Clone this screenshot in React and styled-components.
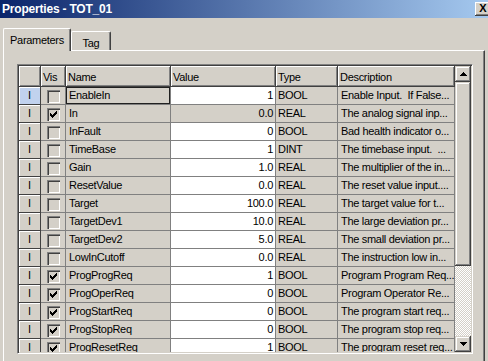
import React from 'react';
import styled, { createGlobalStyle } from 'styled-components';

const Global = createGlobalStyle`
  html, body { margin: 0; padding: 0; overflow: hidden; background: #d4d0c8; }
  body { font-family: "Liberation Sans", Arial, sans-serif; }
`;

const COLS = '22px 25px 105px 105px 62px 117px';

const rows = [
  { name: 'EnableIn', value: '1', type: 'BOOL', desc: 'Enable Input.  If False...', vis: false, edit: true, sel: true },
  { name: 'In', value: '0.0', type: 'REAL', desc: 'The analog signal inp...', vis: true, edit: false },
  { name: 'InFault', value: '0', type: 'BOOL', desc: 'Bad health indicator o...', vis: false, edit: true },
  { name: 'TimeBase', value: '1', type: 'DINT', desc: 'The timebase input.  ...', vis: false, edit: true },
  { name: 'Gain', value: '1.0', type: 'REAL', desc: 'The multiplier of the in...', vis: false, edit: true },
  { name: 'ResetValue', value: '0.0', type: 'REAL', desc: 'The reset value input....', vis: false, edit: true },
  { name: 'Target', value: '100.0', type: 'REAL', desc: 'The target value for t...', vis: false, edit: true },
  { name: 'TargetDev1', value: '10.0', type: 'REAL', desc: 'The large deviation pr...', vis: false, edit: true },
  { name: 'TargetDev2', value: '5.0', type: 'REAL', desc: 'The small deviation pr...', vis: false, edit: true },
  { name: 'LowInCutoff', value: '0.0', type: 'REAL', desc: 'The instruction low in...', vis: false, edit: true },
  { name: 'ProgProgReq', value: '1', type: 'BOOL', desc: 'Program Program Req...', vis: true, edit: true },
  { name: 'ProgOperReq', value: '0', type: 'BOOL', desc: 'Program Operator Re...', vis: true, edit: true },
  { name: 'ProgStartReq', value: '0', type: 'BOOL', desc: 'The program start req...', vis: true, edit: true },
  { name: 'ProgStopReq', value: '0', type: 'BOOL', desc: 'The program stop req...', vis: true, edit: true },
  { name: 'ProgResetReq', value: '1', type: 'BOOL', desc: 'The program reset req...', vis: true, edit: true },
];

const Window = styled.div`
  width: 491px;
  height: 361px;
  background: #d4d0c8;
  display: flex;
  flex-direction: column;
  overflow: hidden;
  font-family: "Liberation Sans", Arial, sans-serif;
  font-size: 11px;
  color: #000;
`;

const TitleBar = styled.div`
  height: 18px;
  flex: none;
  display: flex;
  align-items: center;
  justify-content: space-between;
  padding-left: 2px;
  background: linear-gradient(to right, #0a246a, #a6caf0);
`;

const Title = styled.span`
  color: #fff;
  font-weight: bold;
  font-size: 12px;
  letter-spacing: -0.2px;
`;

const CloseBtn = styled.div`
  width: 16px;
  height: 14px;
  box-sizing: border-box;
  background: #d4d0c8;
  box-shadow: inset -1px -1px #404040, inset 1px 1px #fff, inset -2px -2px #808080;
  display: flex;
  align-items: center;
  justify-content: center;
  font-weight: bold;
  font-size: 11px;
  line-height: 1;
  padding-bottom: 1px;
`;

const TabStrip = styled.div`
  height: 23px;
  margin-top: 10px;
  padding-left: 3px;
  display: flex;
  align-items: flex-end;
  position: relative;
  z-index: 1;
`;

const Tab = styled.div`
  box-sizing: border-box;
  width: ${p => p.$w}px;
  height: ${p => (p.$active ? 23 : 19)}px;
  margin-bottom: ${p => (p.$active ? 0 : 1)}px;
  background: #d4d0c8;
  border-top: 1px solid #fff;
  border-left: 1px solid #fff;
  border-right: 1px solid #404040;
  box-shadow: inset -1px 0 #808080;
  border-radius: 2px 2px 0 0;
  padding-top: 5px;
  line-height: 13px;
  text-align: center;
  letter-spacing: -0.3px;
`;

const Panel = styled.div`
  flex: 1;
  width: 482px;
  margin-left: 3px;
  margin-top: -1px;
  box-sizing: border-box;
  border-top: 1px solid #fff;
  border-left: 1px solid #fff;
  border-right: 1px solid #404040;
  box-shadow: inset -1px 0 #808080;
  padding: 13px 0 0 13px;
`;

const GridFrame = styled.div`
  width: 456px;
  height: 290px;
  box-sizing: border-box;
  border-top: 1px solid #808080;
  border-left: 1px solid #808080;
  border-bottom: 1px solid #fff;
  border-right: 1px solid #fff;
  box-shadow: inset 1px 1px #404040, inset -1px -1px #d4d0c8;
  padding: 1px;
  display: flex;
  overflow: hidden;
`;

const TableArea = styled.div`
  width: 436px;
  flex: none;
  overflow: hidden;
  letter-spacing: -0.3px;
`;

const Row = styled.div`
  display: grid;
  grid-template-columns: ${COLS};
`;

const HeadCell = styled.div`
  box-sizing: border-box;
  height: 21px;
  padding: 2px 0 0 2px;
  line-height: 19px;
  background: #d4d0c8;
  border-right: 1px solid #404040;
  border-bottom: 1px solid #404040;
  box-shadow: inset 1px 1px #fff, inset -1px -1px #808080;
  white-space: pre;
  overflow: hidden;
`;

const Cell = styled.div`
  height: 17px;
  line-height: 17px;
  padding: ${p => (p.$right ? '0 2px 0 0' : `0 0 0 ${p.$pl ?? 3}px`)};
  text-align: ${p => (p.$right ? 'right' : 'left')};
  background: ${p => (p.$white ? '#fff' : '#d4d0c8')};
  border-right: 1px solid #808080;
  border-bottom: 1px solid #808080;
  white-space: pre;
  overflow: hidden;
  box-shadow: ${p => (p.$focus ? 'inset 0 0 0 1px #202020' : 'none')};
`;

const RowHead = styled.div`
  height: 17px;
  line-height: 17px;
  text-align: center;
  background: ${p => (p.$sel ? '#c1d2ee' : '#d4d0c8')};
  border-right: 1px solid #404040;
  border-bottom: 1px solid #404040;
  box-shadow: inset 1px 1px #fff;
`;

const VisCell = styled.div`
  height: 17px;
  background: #d4d0c8;
  border-right: 1px solid #808080;
  border-bottom: 1px solid #808080;
  display: flex;
  justify-content: center;
  padding-left: 1px;
`;

const CheckBox = styled.div`
  width: 13px;
  height: 13px;
  margin-top: 3px;
  box-sizing: border-box;
  background: #d4d0c8;
  box-shadow: inset 1px 1px #808080, inset 2px 2px #404040, inset -1px -1px #fff, inset -2px -2px #d4d0c8;
  display: flex;
  align-items: center;
  justify-content: center;
`;

const ScrollBar = styled.div`
  width: 16px;
  flex: none;
  display: flex;
  flex-direction: column;
`;

const raised = `
  background: #d4d0c8;
  box-shadow: inset -1px -1px #404040, inset 1px 1px #d4d0c8, inset -2px -2px #808080, inset 2px 2px #fff;
`;

const ScrollBtn = styled.div`
  height: 16px;
  flex: none;
  ${raised}
  display: flex;
  align-items: center;
  justify-content: center;
`;

const Track = styled.div`
  flex: 1;
  display: flex;
  flex-direction: column;
  background-color: #d4d0c8;
  background-image: conic-gradient(#fff 25%, #d4d0c8 0 50%, #fff 0 75%, #d4d0c8 0);
  background-size: 2px 2px;
`;

const Thumb = styled.div`
  height: ${p => p.$h}px;
  flex: none;
  ${raised}
`;

const Arrow = ({ down }) => (
  <svg width="7" height="4" viewBox="0 0 7 4" shapeRendering="crispEdges"
    style={down ? { transform: 'scaleY(-1)' } : undefined}>
    <path d="M3 0h1v1H3zM2 1h3v1H2zM1 2h5v1H1zM0 3h7v1H0z" fill="#000" />
  </svg>
);

const CheckMark = () => (
  <svg width="7" height="7" viewBox="0 0 7 7" shapeRendering="crispEdges">
    <path d="M6 0h1v1H6zM5 1h2v1H5zM0 2h1v1H0zM4 2h3v1H4zM0 3h2v1H0zM3 3h3v1H3zM0 4h5v1H0zM1 5h3v1H1zM2 6h1v1H2z" fill="#000" />
  </svg>
);

export default function App() {
  return (
    <>
      <Global />
      <Window>
        <TitleBar>
          <Title>Properties - TOT_01</Title>
          <CloseBtn>X</CloseBtn>
        </TitleBar>
        <TabStrip>
          <Tab $active $w={68}>Parameters</Tab>
          <Tab $w={40}>Tag</Tab>
        </TabStrip>
        <Panel>
          <GridFrame>
            <TableArea>
              <Row>
                <HeadCell />
                <HeadCell>Vis</HeadCell>
                <HeadCell>Name</HeadCell>
                <HeadCell>Value</HeadCell>
                <HeadCell>Type</HeadCell>
                <HeadCell>Description</HeadCell>
              </Row>
              {rows.map(r => (
                <Row key={r.name}>
                  <RowHead $sel={r.sel}>I</RowHead>
                  <VisCell>
                    <CheckBox>{r.vis && <CheckMark />}</CheckBox>
                  </VisCell>
                  <Cell $focus={r.sel}>{r.name}</Cell>
                  <Cell $right $white={r.edit}>{r.value}</Cell>
                  <Cell $pl={2}>{r.type}</Cell>
                  <Cell>{r.desc}</Cell>
                </Row>
              ))}
            </TableArea>
            <ScrollBar>
              <ScrollBtn><Arrow /></ScrollBtn>
              <Track>
                <Thumb $h={184} />
              </Track>
              <ScrollBtn><Arrow down /></ScrollBtn>
            </ScrollBar>
          </GridFrame>
        </Panel>
      </Window>
    </>
  );
}
